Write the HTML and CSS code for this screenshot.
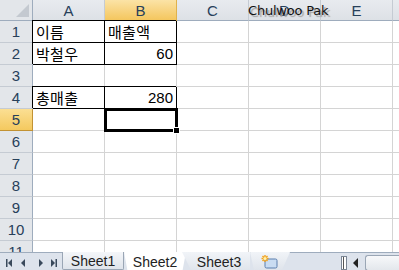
FILE: index.html
```html
<!DOCTYPE html>
<html>
<head>
<meta charset="utf-8">
<link rel="stylesheet" href="styles.css">
</head>
<body>
<div class="app">
  <div class="sheet">
    <div class="grid">
      <div class="corner"><span class="tri"></span></div>
      <div class="ch">A</div><div class="ch sel">B</div><div class="ch">C</div><div class="ch">D</div><div class="ch">E</div><div class="ch last"></div>

      <div class="rh">1</div><div class="c b-all">이름</div><div class="c b-all">매출액</div><div class="c"></div><div class="c"></div><div class="c"></div><div class="c"></div>
      <div class="rh">2</div><div class="c b-all">박철우</div><div class="c b-all num">60</div><div class="c"></div><div class="c"></div><div class="c"></div><div class="c"></div>
      <div class="rh">3</div><div class="c"></div><div class="c"></div><div class="c"></div><div class="c"></div><div class="c"></div><div class="c"></div>
      <div class="rh">4</div><div class="c b-all">총매출</div><div class="c b-all num">280</div><div class="c"></div><div class="c"></div><div class="c"></div><div class="c"></div>
      <div class="rh sel">5</div><div class="c"></div><div class="c active"><span class="handle"></span></div><div class="c"></div><div class="c"></div><div class="c"></div><div class="c"></div>
      <div class="rh">6</div><div class="c"></div><div class="c"></div><div class="c"></div><div class="c"></div><div class="c"></div><div class="c"></div>
      <div class="rh">7</div><div class="c"></div><div class="c"></div><div class="c"></div><div class="c"></div><div class="c"></div><div class="c"></div>
      <div class="rh">8</div><div class="c"></div><div class="c"></div><div class="c"></div><div class="c"></div><div class="c"></div><div class="c"></div>
      <div class="rh">9</div><div class="c"></div><div class="c"></div><div class="c"></div><div class="c"></div><div class="c"></div><div class="c"></div>
      <div class="rh">10</div><div class="c"></div><div class="c"></div><div class="c"></div><div class="c"></div><div class="c"></div><div class="c"></div>
      <div class="rh">11</div><div class="c"></div><div class="c"></div><div class="c"></div><div class="c"></div><div class="c"></div><div class="c"></div>
    </div>
    <div class="watermark">Chulwoo Pak</div>
  </div>
  <div class="tabbar">
    <div class="nav">
      <svg width="62" height="18" viewBox="0 0 62 18">
        <g fill="#3a4a5c">
          <rect x="6" y="5" width="1.5" height="8"/>
          <polygon points="8,9 12,5 12,13"/>
          <polygon points="21,9 25,5 25,13"/>
          <polygon points="39,5 43,9 39,13"/>
          <polygon points="51,5 55,9 51,13"/>
          <rect x="55.5" y="5" width="1.5" height="8"/>
        </g>
      </svg>
    </div>
    <div class="tabs">
      <div class="tab t1">Sheet1</div>
      <div class="tab t2">Sheet2</div>
      <div class="tab t3">Sheet3</div>
      <div class="tab t4">
        <svg width="20" height="16" viewBox="0 0 20 16">
          <rect x="5" y="5" width="12" height="9" rx="1.5" fill="#c9dcf2" stroke="#5b7fae"/>
          <g stroke="#f2a21b" stroke-width="1.4">
            <line x1="5" y1="1" x2="5" y2="8"/>
            <line x1="1.5" y1="4.5" x2="8.5" y2="4.5"/>
            <line x1="2.5" y1="2" x2="7.5" y2="7"/>
            <line x1="7.5" y1="2" x2="2.5" y2="7"/>
          </g>
          <circle cx="5" cy="4.5" r="1.6" fill="#fff3b0"/>
        </svg>
      </div>
    </div>
    <div class="spacer"></div>
    <div class="split"></div>
    <div class="arrow">
      <svg width="10" height="12" viewBox="0 0 10 12"><polygon points="7,1 2,6 7,11" fill="#222"/></svg>
    </div>
    <div class="thumb"></div>
  </div>
</div>
</body>
</html>
```
FILE: styles.css
```css
html, body {
  margin: 0;
  padding: 0;
  background: #fff;
}
.app {
  width: 399px;
  height: 270px;
  overflow: hidden;
  display: flex;
  flex-direction: column;
  font-family: "Noto Sans CJK KR", "Noto Sans", sans-serif;
}
.sheet {
  position: relative;
  height: 252px;
  overflow: hidden;
  flex: none;
}
.grid {
  display: grid;
  grid-template-columns: 33px repeat(5, 72px) 46px;
  grid-template-rows: 21px repeat(11, 22px);
}
.corner {
  background: #e3e6ea;
  border-right: 1px solid #9eacbd;
  border-bottom: 1px solid #9eacbd;
  box-sizing: border-box;
  position: relative;
}
.tri {
  position: absolute;
  right: 3px;
  bottom: 3px;
  width: 0;
  height: 0;
  border-left: 13px solid transparent;
  border-bottom: 13px solid #c4c9d0;
}
.ch {
  background: linear-gradient(#e8ebef, #dde1e6);
  border-right: 1px solid #c5cbd3;
  border-bottom: 1px solid #9eacbd;
  box-sizing: border-box;
  display: flex;
  align-items: center;
  justify-content: center;
  font-family: "Liberation Sans", "Noto Sans", sans-serif;
  font-size: 15px;
  color: #27405a;
  padding-top: 1px;
}
.ch.sel {
  background: linear-gradient(#fbe3a6, #f4c65e);
  border-right-color: #e0b24c;
  border-bottom-color: #c29233;
}
.ch.last { border-right: none; }
.rh {
  background: #e3e6ea;
  border-right: 1px solid #9eacbd;
  border-bottom: 1px solid #c5cbd3;
  box-sizing: border-box;
  display: flex;
  align-items: center;
  justify-content: center;
  font-family: "Liberation Sans", "Noto Sans", sans-serif;
  font-size: 15px;
  color: #27405a;
}
.rh.sel {
  background: linear-gradient(#fbdf93, #f4c95f);
  border-bottom-color: #c29233;
  border-right-color: #c29233;
}
.c {
  border-right: 1px solid #d4d4d4;
  border-bottom: 1px solid #d4d4d4;
  box-sizing: border-box;
  font-size: 15px;
  color: #000;
  display: flex;
  align-items: center;
  padding: 0 3px 0 3px;
  line-height: 1;
  position: relative;
  letter-spacing: 0.3px;
}
.c.b-all {
  border-right-color: #000;
  border-bottom-color: #000;
  box-shadow: -1px -1px 0 #000;
}
.c.num {
  justify-content: flex-end;
  font-family: "Liberation Sans", "Noto Sans", sans-serif;
  font-size: 15px;
  letter-spacing: 0;
}
.c.active {
  outline: 3px solid #000;
  outline-offset: -2px;
  z-index: 2;
}
.handle {
  position: absolute;
  right: -4px;
  bottom: -4px;
  width: 5px;
  height: 5px;
  background: #000;
  border: 1px solid #fff;
}
.watermark {
  position: absolute;
  left: 248px;
  top: 3px;
  font-family: "DejaVu Sans", "Noto Sans", sans-serif;
  font-size: 13px;
  color: #111;
  text-shadow: 2px 2px 1px #a0a0a0;
  letter-spacing: -0.2px;
}
.tabbar {
  flex: 1;
  display: flex;
  align-items: stretch;
  background: #dde3ec;
  border-top: 1px solid #9eacbd;
}
.nav {
  width: 62px;
  display: flex;
  align-items: center;
}
.tabs {
  display: flex;
  align-items: stretch;
  margin-top: -1px;
}
.tab {
  font-family: "Liberation Sans", "Noto Sans", sans-serif;
  font-size: 14px;
  color: #222;
  display: flex;
  align-items: center;
  justify-content: center;
  height: 18px;
  padding-top: 1px;
}
.t1 {
  width: 62px;
  background: linear-gradient(#f4f6f9, #dfe4eb);
  border: 1px solid #9aa6b5;
  border-top: none;
  border-radius: 0 0 2px 2px;
  box-sizing: border-box;
}
.t2 {
  width: 62px;
  background: #fff;
  clip-path: polygon(0 0, 100% 0, 94% 100%, 6% 100%);
  border-bottom: 1px solid #9aa6b5;
}
.t3 {
  width: 62px;
  background: linear-gradient(#f1f4f8, #dfe4eb);
  clip-path: polygon(0 0, 100% 0, 100% 100%, 14% 100%);
  margin-left: -4px;
  padding-left: 6px;
}
.t4 {
  width: 40px;
  background: linear-gradient(#f1f4f8, #dfe4eb);
  clip-path: polygon(0 0, 100% 0, 80% 100%, 10% 100%);
  justify-content: flex-start;
  padding-left: 10px;
  box-sizing: border-box;
}
.spacer { flex: 1; }
.split {
  width: 4px;
  height: 12px;
  margin: 3px 0 0 0;
  border: 1px solid #7a8594;
  background: #fff;
  box-shadow: inset 1px 0 0 #fff, inset 2px 0 0 #555;
}
.arrow {
  width: 18px;
  display: flex;
  align-items: center;
  justify-content: center;
}
.thumb {
  width: 33px;
  margin: 2px 0 1px 0;
  background: linear-gradient(#f7f8fa, #e3e7ec);
  border: 1px solid #9aa6b5;
  border-right: none;
  border-radius: 3px 0 0 3px;
}
```
